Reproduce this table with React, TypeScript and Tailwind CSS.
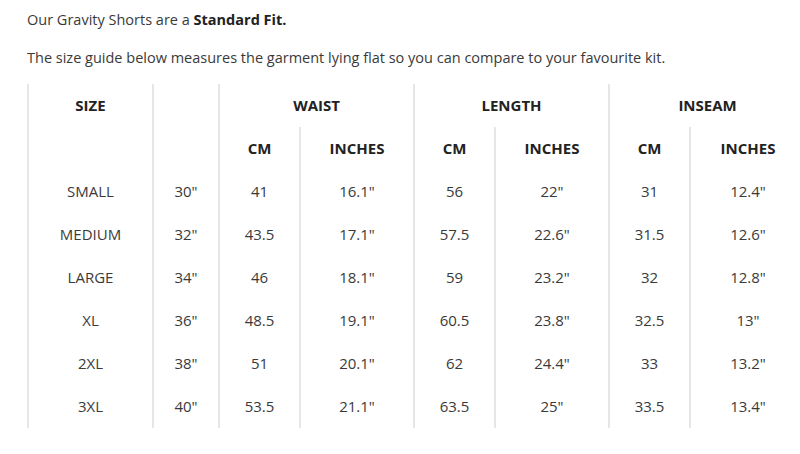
const rows = [
  ['SMALL', '30"', '41', '16.1"', '56', '22"', '31', '12.4"'],
  ['MEDIUM', '32"', '43.5', '17.1"', '57.5', '22.6"', '31.5', '12.6"'],
  ['LARGE', '34"', '46', '18.1"', '59', '23.2"', '32', '12.8"'],
  ['XL', '36"', '48.5', '19.1"', '60.5', '23.8"', '32.5', '13"'],
  ['2XL', '38"', '51', '20.1"', '62', '24.4"', '33', '13.2"'],
  ['3XL', '40"', '53.5', '21.1"', '63.5', '25"', '33.5', '13.4"'],
];

const widths = ['w-[125px]', 'w-[66px]', 'w-[81px]', 'w-[114px]', 'w-[81px]', 'w-[114px]', 'w-[81px]', 'w-[115px]'];

const cell = 'h-[43px] p-0 text-center align-middle border-l-2 border-[#e6e6e6]';

export default function App() {
  return (
    <div className="w-[800px] h-[454px] overflow-hidden bg-white text-[#3a3a3a] font-['Open_Sans',sans-serif] text-[15px]">
      <div className="pl-[27px] pt-[9px]">
        <p className="leading-[22px] text-[14.5px]">
          Our Gravity Shorts are a <strong className="font-bold text-[#222]">Standard Fit.</strong>
        </p>
        <p className="leading-[22px] mt-[16px] text-[14.5px]">
          The size guide below measures the garment lying flat so you can compare to your favourite kit.
        </p>

        {/* Size table */}
        <table className="mt-[15px] table-fixed border-collapse w-[777px]">
          <colgroup>
            {widths.map((w, i) => (
              <col key={i} className={w} />
            ))}
          </colgroup>
          <thead className="font-bold text-[#222]">
            <tr>
              <th className={cell}>SIZE</th>
              <th className={cell}></th>
              <th className={cell} colSpan={2}>WAIST</th>
              <th className={cell} colSpan={2}>LENGTH</th>
              <th className={cell} colSpan={2}>INSEAM</th>
            </tr>
            <tr>
              <th className={cell}></th>
              <th className={cell}></th>
              <th className={cell}>CM</th>
              <th className={cell}>INCHES</th>
              <th className={cell}>CM</th>
              <th className={cell}>INCHES</th>
              <th className={cell}>CM</th>
              <th className={cell}>INCHES</th>
            </tr>
          </thead>
          <tbody>
            {rows.map((r) => (
              <tr key={r[0]}>
                {r.map((v, i) => (
                  <td key={i} className={cell}>
                    {v}
                  </td>
                ))}
              </tr>
            ))}
          </tbody>
        </table>
      </div>
    </div>
  );
}
